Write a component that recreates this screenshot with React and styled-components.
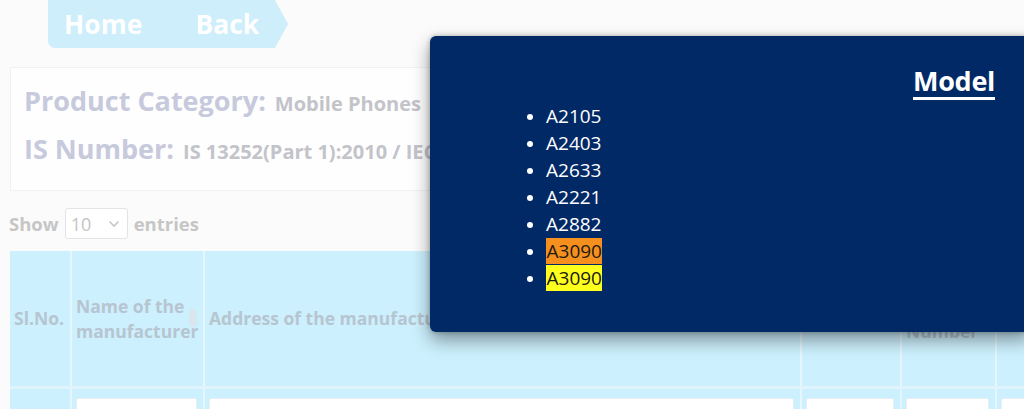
import React from "react";
import styled, { createGlobalStyle } from "styled-components";

const Global = createGlobalStyle`
  html, body { margin: 0; padding: 0; overflow: hidden; }
  body { background: #fbfbfb; font-family: "Open Sans", "Noto Sans", sans-serif; width: 1024px; height: 409px; position: relative; }
`;

const Page = styled.div`
  padding: 0 0 0 10px;
  width: 1200px;
`;

const Crumbs = styled.nav`
  display: flex;
  margin-left: 38px;
  height: 48px;
`;

const CrumbBar = styled.div`
  position: relative;
  display: flex;
  align-items: center;
  height: 48px;
  width: 227px;
  background: #cdeefa;
  border-radius: 0 0 0 7px;
  &::after {
    content: "";
    position: absolute;
    right: -13px;
    top: 0;
    border-left: 13px solid #cdeefa;
    border-top: 24px solid transparent;
    border-bottom: 24px solid transparent;
  }
`;

const Crumb = styled.span`
  font-size: 26.5px;
  font-weight: 700;
  color: #ffffff;
  margin-left: ${(p) => p.$gap}px;
`;

const Card = styled.section`
  margin-top: 19px;
  width: 1000px;
  height: 124px;
  box-sizing: border-box;
  background: #fefefe;
  border: 1px solid #f1f1f3;
  padding: 14px 13px;
  display: flex;
  flex-direction: column;
  gap: 10px;
`;

const InfoLine = styled.div`
  display: flex;
  align-items: baseline;
  gap: 9px;
  height: 38px;
`;

const InfoLabel = styled.span`
  font-size: 27px;
  font-weight: 700;
  color: #c7c9dc;
`;

const InfoValue = styled.span`
  font-size: 20px;
  font-weight: 700;
  color: #c3c3ca;
`;

const ShowRow = styled.div`
  display: flex;
  align-items: center;
  gap: 6px;
  margin: 17px 0 0 -1px;
  height: 31px;
  font-size: 18.5px;
  font-weight: 700;
  color: #c6c6c6;
`;

const Select = styled.div`
  width: 63px;
  height: 31px;
  box-sizing: border-box;
  border: 1px solid #e4e4e4;
  border-radius: 3px;
  background: #fff;
  display: flex;
  align-items: center;
  justify-content: space-between;
  padding: 0 7px 0 5px;
  font-weight: 400;
  font-size: 18px;
  color: #c4c4c4;
`;

const Table = styled.table`
  margin-top: 12px;
  border-collapse: collapse;
  table-layout: fixed;
  width: 1200px;
  background: #ccf0fd;
`;

const HeadCell = styled.th`
  width: ${(p) => p.$w - 10}px;
  height: 135px;
  padding: 0 4px;
  text-align: left;
  font-size: 17.5px;
  font-weight: 700;
  line-height: 25px;
  color: #b7c5d1;
  border-right: 2px solid #e6f6fd;
  position: relative;
  vertical-align: middle;
  white-space: ${(p) => (p.$nowrap ? "nowrap" : "normal")};
  overflow: hidden;
`;

const SortMark = styled.span`
  position: absolute;
  right: 6px;
  top: 58px;
  width: 8px;
  height: 18px;
  border-radius: 4px;
  background: #d9e6ee;
`;

const SearchRow = styled.tr`
  border-top: 3px solid #e0f4fc;
`;

const SearchCell = styled.td`
  height: 40px;
  padding: 9px 6px 0 4px;
  vertical-align: top;
  border-right: 2px solid #e6f6fd;
`;

const SearchBox = styled.div`
  height: 30px;
  background: #fff;
  border: 1px solid #e8eef2;
  border-radius: 2px;
  font-size: 15px;
  color: #c9c9c9;
  padding: 0 8px;
  line-height: 30px;
  overflow: hidden;
`;

const Modal = styled.div`
  position: absolute;
  top: 36px;
  left: 430px;
  width: 600px;
  height: 296px;
  box-sizing: border-box;
  background: #012966;
  border-radius: 6px 0 0 6px;
  box-shadow: 0 8px 18px rgba(0, 0, 0, 0.4), 0 0 5px rgba(0, 0, 0, 0.25);
  padding: 28px 35px 0 0;
  color: #fff;
`;

const TitleRow = styled.div`
  text-align: right;
  line-height: 33px;
`;

const Title = styled.span`
  display: inline-block;
  font-size: 27px;
  font-weight: 700;
  line-height: 33px;
  border-bottom: 3px solid #ffffff;
  letter-spacing: -0.3px;
`;

const ModelList = styled.ul`
  margin: 1px 0 0 76px;
  padding-left: 40px;
  list-style: disc;
`;

const ModelItem = styled.li`
  font-size: 19px;
  line-height: 27px;
  &::marker { font-size: 18px; }
`;

const Mark = styled.span`
  background: ${(p) => p.$bg};
  color: #1d1a10;
  padding: 0 0.5px;
`;

const models = [
  { name: "A2105" },
  { name: "A2403" },
  { name: "A2633" },
  { name: "A2221" },
  { name: "A2882" },
  { name: "A3090", bg: "#f5901f" },
  { name: "A3090", bg: "#ffff1e" },
];

const cols = [
  { w: 62, label: "Sl.No.", nowrap: true },
  { w: 133, label: "Name of the manufacturer", sort: true },
  { w: 597, label: "Address of the manufacturer", nowrap: true },
  { w: 100, label: "Brand", nowrap: true },
  { w: 95, label: "Contact Number" },
  { w: 213, label: "Email Specification" },
];

export default function App() {
  return (
    <>
      <Global />
      <Page>
        <Crumbs>
          <CrumbBar>
            <Crumb $gap={16}>Home</Crumb>
            <Crumb $gap={53}>Back</Crumb>
          </CrumbBar>
        </Crumbs>
        <Card>
          <InfoLine>
            <InfoLabel>Product Category:</InfoLabel>
            <InfoValue>Mobile Phones</InfoValue>
          </InfoLine>
          <InfoLine>
            <InfoLabel>IS Number:</InfoLabel>
            <InfoValue>IS 13252(Part 1):2010 / IEC 60950-1:2005</InfoValue>
          </InfoLine>
        </Card>
        <ShowRow>
          Show
          <Select>
            <span>10</span>
            <svg width="12" height="8" viewBox="0 0 12 8">
              <path d="M1.5 1.5 L6 6 L10.5 1.5" fill="none" stroke="#c6c6c6" strokeWidth="1.6" />
            </svg>
          </Select>
          entries
        </ShowRow>
        <Table>
          <thead>
            <tr>
              {cols.map((c, i) => (
                <HeadCell key={i} $w={c.w} $nowrap={c.nowrap}>
                  {c.label}
                  {c.sort && <SortMark />}
                </HeadCell>
              ))}
            </tr>
          </thead>
          <tbody>
            <SearchRow>
              {cols.map((c, i) => (
                <SearchCell key={i}>{i > 0 && <SearchBox>Search</SearchBox>}</SearchCell>
              ))}
            </SearchRow>
          </tbody>
        </Table>
      </Page>
      <Modal>
        <TitleRow>
          <Title>Model</Title>
        </TitleRow>
        <ModelList>
          {models.map((m, i) => (
            <ModelItem key={i}>{m.bg ? <Mark $bg={m.bg}>{m.name}</Mark> : m.name}</ModelItem>
          ))}
        </ModelList>
      </Modal>
    </>
  );
}
